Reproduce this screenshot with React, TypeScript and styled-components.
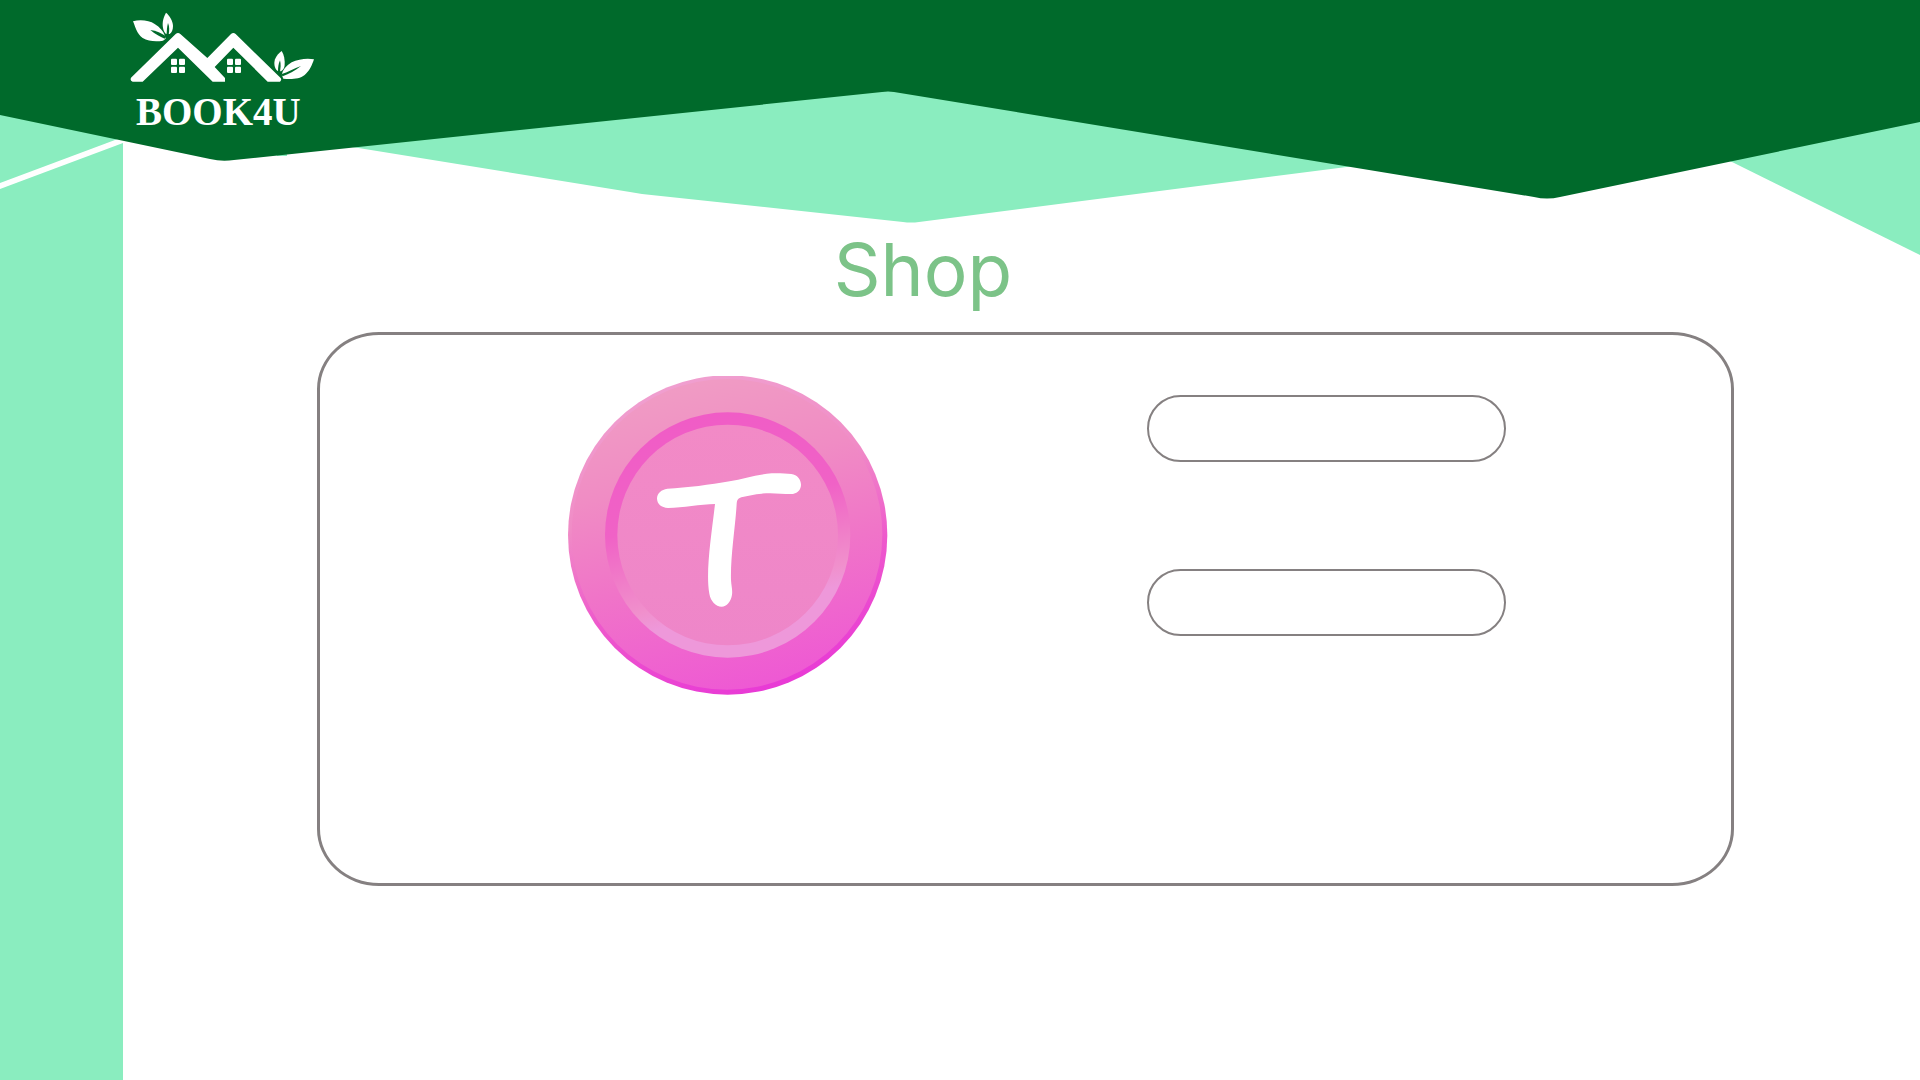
import React from "react";
import styled, { createGlobalStyle } from "styled-components";

const colors = {
  forest: "#006a2b",
  mint: "#8aedbf",
  title: "#7cc388",
  outline: "#858081",
  page: "#ffffff",
};

const GlobalStyle = createGlobalStyle`
  * { box-sizing: border-box; }
  body {
    margin: 0;
    background: ${colors.page};
    font-family: Inter, "Liberation Sans", sans-serif;
  }
`;

const Page = styled.div`
  display: grid;
  grid-template-columns: minmax(0, 1fr);
  min-height: 100vh;
`;

const Backdrop = styled.div`
  grid-area: 1 / 1;
  display: flex;
  flex-direction: column;
`;

const Banner = styled.svg`
  display: block;
  width: 100%;
  height: 255px;
`;

const SideBand = styled.div`
  flex: 1;
  width: 6.4%;
  background: ${colors.mint};
`;

const Content = styled.div`
  grid-area: 1 / 1;
  display: flex;
  flex-direction: column;
`;

const Header = styled.header`
  display: flex;
  height: 222px;
  padding: 12px 130px;
`;

const LogoLink = styled.a`
  display: flex;
  flex-direction: column;
  align-items: flex-start;
  align-self: flex-start;
  color: #fff;
  text-decoration: none;
`;

const LogoMark = styled.svg`
  display: block;
  width: 186px;
  height: 71px;
`;

const LogoName = styled.span`
  padding: 6px;
  font-family: "Liberation Serif", serif;
  font-size: 39px;
  font-weight: 700;
  line-height: 46px;
`;

const Title = styled.h1`
  margin: 0;
  padding-right: 74px;
  color: ${colors.title};
  font-size: 73px;
  font-weight: 400;
  line-height: 96px;
  text-align: center;
`;

const Panel = styled.main`
  display: flex;
  align-items: flex-start;
  gap: 259px;
  min-height: 554px;
  margin: 14px 186px 48px 317px;
  padding: 40px 0 40px 248px;
  border: 3px solid ${colors.outline};
  border-radius: 62px / 57px;
`;

const Coin = styled.svg`
  flex: none;
  width: 320px;
  height: 320px;
`;

const Form = styled.form`
  display: flex;
  flex: 0 1 359px;
  flex-direction: column;
  gap: 107px;
  padding-top: 20px;
`;

const Field = styled.input`
  width: 100%;
  height: 67px;
  padding: 0 32px;
  border: 2px solid ${colors.outline};
  border-radius: 34px;
  background: transparent;
  font: 24px Inter, "Liberation Sans", sans-serif;
`;

function BannerArt() {
  return (
    <Banner viewBox="0 0 1920 255" preserveAspectRatio="none" aria-hidden="true">
      <g fill={colors.mint}>
        <path d="M0 100H123V137L0 183Z" />
        <path d="M0 189L123 143V255H0Z" />
        <path d="M277 150H287V156H277Z" />
        <path d="M340 145L630 192Q636 193 642 194L903 222Q911 223 919 222L1370 164L900 60Z" />
        <path d="M1730 161L1920 255V100Z" />
      </g>
      <path
        fill={colors.forest}
        d="M0 0H1920V122L1560 197Q1547 200 1534 197L894 92Q888 91 882 92L234 160Q222 162 210 159L0 115Z"
      />
    </Banner>
  );
}

function Mark() {
  return (
    <LogoMark viewBox="30 36 558 213" aria-hidden="true">
      <g fill="#fff">
        <path d="M33 233L167 102Q174 96 181 102L262 174L333 102Q340 96 347 102L482 234Q486 239 480 245H443L340 143L284 201L315 234V245H278L174 143L68 245H38Q29 242 33 233Z" />
        <path d="M39 64C60 58 88 61 104 72C120 82 130 94 134 106L137 116L129 122C108 126 85 124 68 114C50 101 46 80 39 64Z" />
        <path d="M138 38C148 46 159 62 159 78C159 90 155 98 149 102L137 101C128 92 126 72 130 58C132 49 135 44 138 38Z" />
        <path d="M485 153C492 163 495 180 494 195C493 205 489 210 483 214L473 213C463 206 461 190 465 178C470 165 478 158 485 153Z" />
        <path d="M582 178C562 174 535 177 515 187C498 197 488 210 485 224L490 236C512 238 538 238 554 225C569 213 576 195 582 178Z" />
        {[153, 321].map((x) =>
          [0, 24].map((dx) =>
            [176, 200].map((y) => (
              <rect key={`${x + dx}-${y}`} x={x + dx} y={y} width="18" height="19" rx="3" />
            ))
          )
        )}
      </g>
      <g fill={colors.forest}>
        <path d="M91 90C108 92 126 100 138 109L134 116C120 110 104 102 91 90Z" />
        <path d="M144 69C149 80 148 92 146 104H140C140 92 141 80 144 69Z" />
        <path d="M480 181C483 192 482 203 480 216H474C474 203 475 192 480 181Z" />
        <path d="M543 198C525 212 508 221 488 229L483 223C504 216 522 206 543 198Z" />
      </g>
    </LogoMark>
  );
}

function TokenCoin() {
  return (
    <Coin viewBox="54 45 960 960" role="img" aria-label="Token coin">
      <defs>
        <linearGradient id="rim" x1="0.35" y1="0" x2="0.65" y2="1">
          <stop offset="0" stopColor="#f0a0d0" />
          <stop offset="0.35" stopColor="#f08cc6" />
          <stop offset="0.65" stopColor="#ee58cc" />
          <stop offset="1" stopColor="#e838d6" />
        </linearGradient>
        <linearGradient id="face" x1="0.38" y1="0" x2="0.62" y2="1">
          <stop offset="0" stopColor="#f09cc4" />
          <stop offset="0.3" stopColor="#f08cc4" />
          <stop offset="0.6" stopColor="#f074c8" />
          <stop offset="1" stopColor="#ee58d4" />
        </linearGradient>
        <linearGradient id="groove" x1="0.38" y1="0" x2="0.62" y2="1">
          <stop offset="0" stopColor="#f05cc6" />
          <stop offset="0.4" stopColor="#f062c6" />
          <stop offset="0.58" stopColor="#f07cc8" />
          <stop offset="0.72" stopColor="#f090cc" />
          <stop offset="0.8" stopColor="#ee98da" />
          <stop offset="1" stopColor="#ee98da" />
        </linearGradient>
        <linearGradient id="center" x1="0" y1="0" x2="0" y2="1">
          <stop offset="0" stopColor="#f28ac6" />
          <stop offset="1" stopColor="#ee86c9" />
        </linearGradient>
        <clipPath id="edge">
          <rect x="54" y="48" width="960" height="957" />
        </clipPath>
      </defs>
      <g clipPath="url(#edge)">
        <circle cx="533" cy="525" r="479" fill="url(#rim)" />
        <circle cx="531" cy="523" r="466" fill="url(#face)" />
      </g>
      <circle cx="533" cy="525" r="368" fill="url(#groove)" />
      <circle cx="533" cy="525" r="331" fill="url(#center)" />
      <path
        fill="#fff"
        d="M352 386C412 384 480 374 539 364C580 356 620 343 665 340C688 339 708 341 724 342C742 344 753 359 753 374C753 389 742 402 722 402C695 402 665 397 635 401C614 403 594 407 574 412C564 415 561 420 560 432C556 500 541 590 543 660C544 678 548 690 546 704C543 724 530 740 515 740C497 740 482 723 478 701C466 635 485 520 495 432C450 433 400 443 354 444C334 443 321 433 321 415C322 399 334 389 352 386Z"
      />
    </Coin>
  );
}

export default function App() {
  return (
    <>
      <GlobalStyle />
      <Page>
        <Backdrop>
          <BannerArt />
          <SideBand />
        </Backdrop>
        <Content>
          <Header>
            <LogoLink href="#">
              <Mark />
              <LogoName>BOOK4U</LogoName>
            </LogoLink>
          </Header>
          <Title>Shop</Title>
          <Panel>
            <TokenCoin />
            <Form>
              <Field type="text" name="quantity" aria-label="Quantity" />
              <Field type="text" name="total" aria-label="Total" />
            </Form>
          </Panel>
        </Content>
      </Page>
    </>
  );
}
